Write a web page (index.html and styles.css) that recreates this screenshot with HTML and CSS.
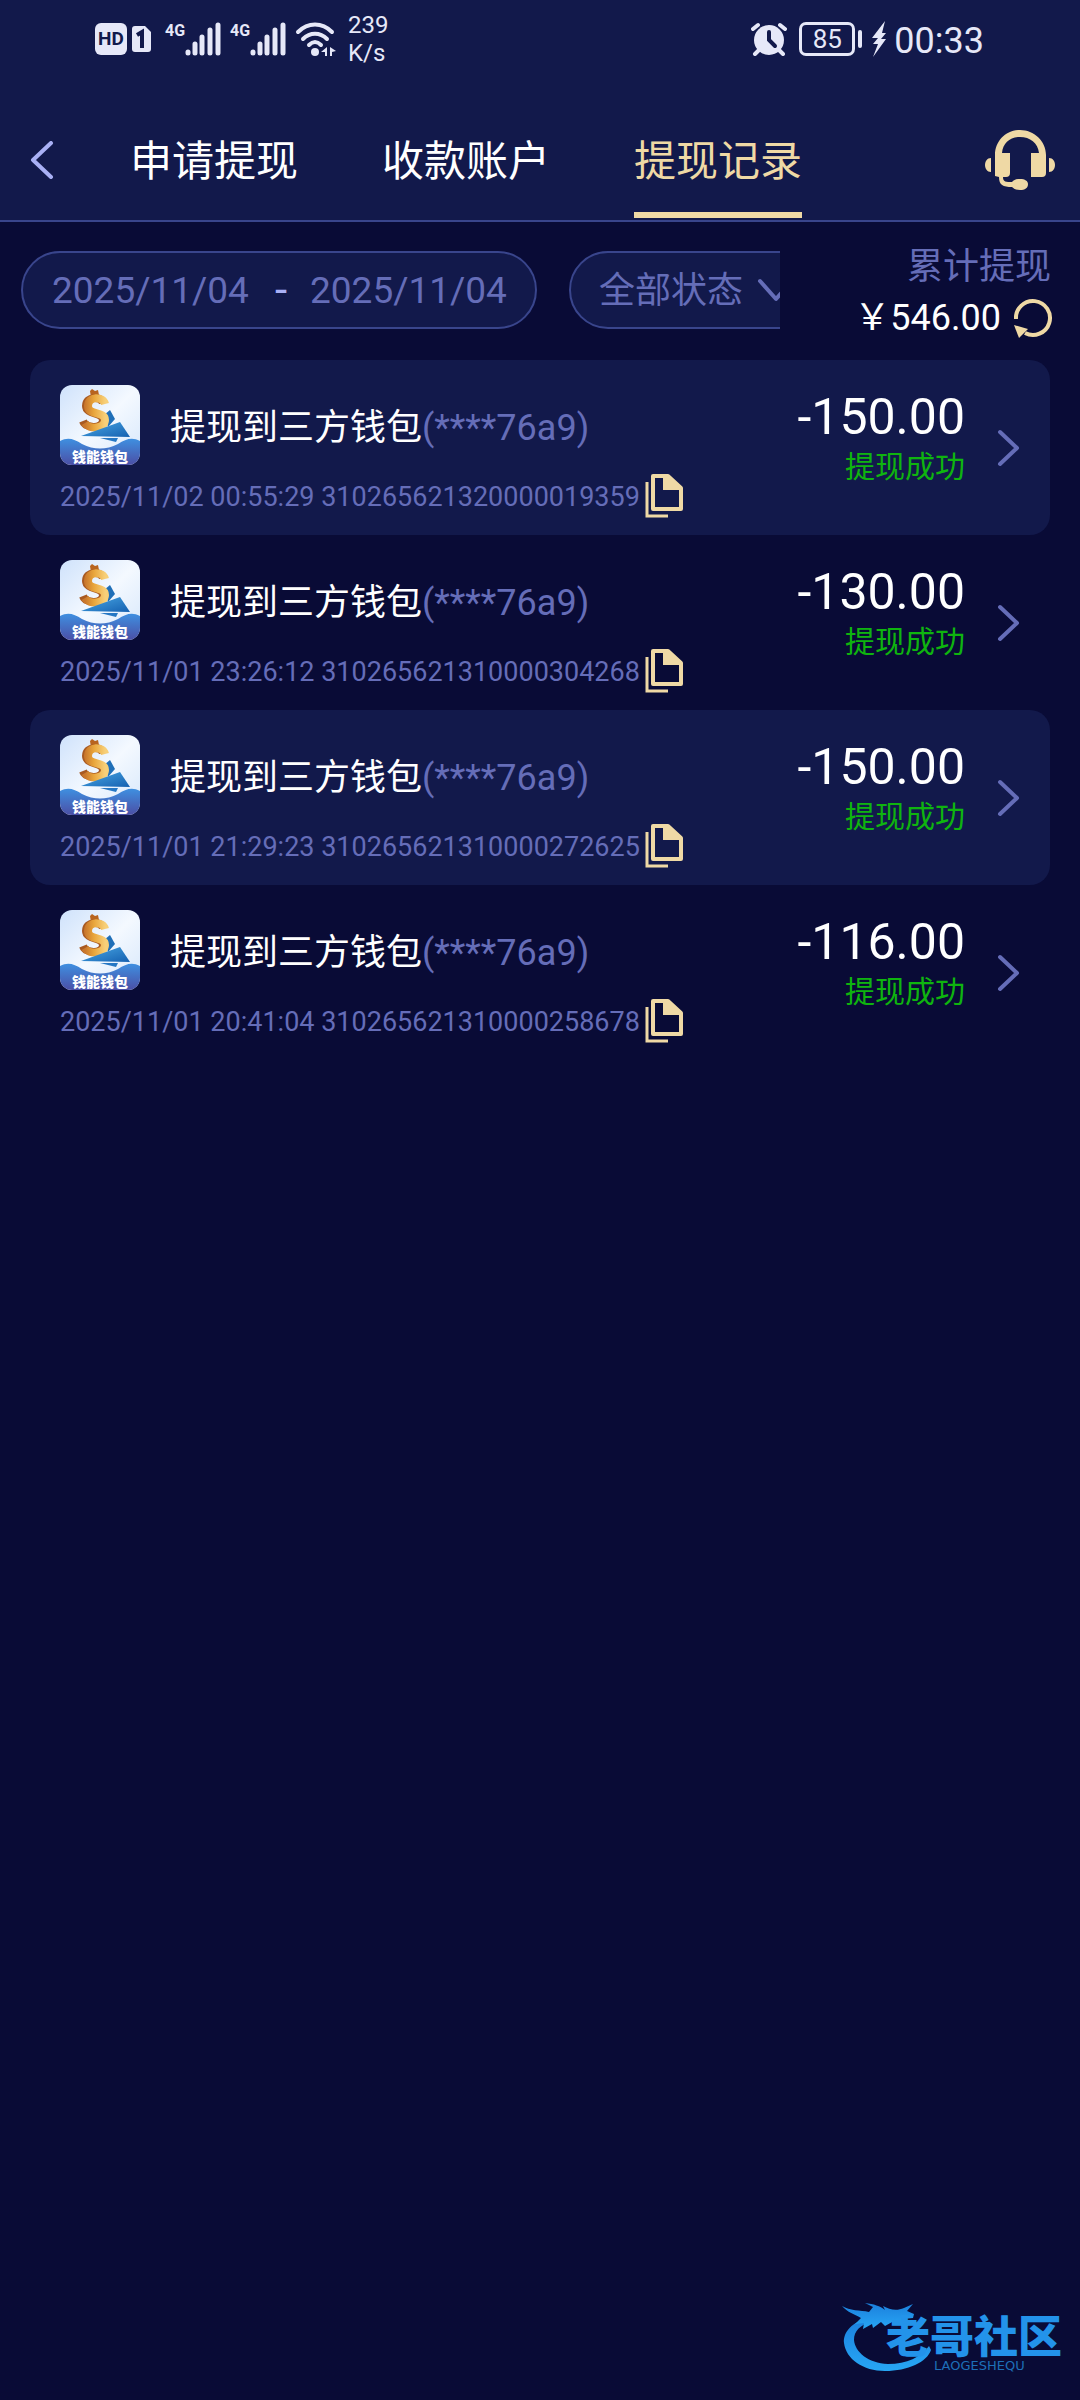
FILE: index.html
```html
<!DOCTYPE html>
<html lang="zh-CN">
<head>
<meta charset="utf-8">
<meta name="viewport" content="width=device-width, initial-scale=1">
<title>提现记录</title>
<link rel="stylesheet" href="styles.css">
</head>
<body>
<svg class="defs" aria-hidden="true">
  <defs>
    <linearGradient id="sky" x1="0" y1="0" x2="1" y2="1"><stop offset="0" stop-color="#cfe2fb"/><stop offset=".5" stop-color="#f4f9ff"/><stop offset="1" stop-color="#d5e6fb"/></linearGradient>
    <linearGradient id="sea" x1="0" y1="0" x2="0" y2="1"><stop offset="0" stop-color="#3f8fe0"/><stop offset="1" stop-color="#4b4fa6"/></linearGradient>
    <linearGradient id="coin" x1="0" y1="0" x2="1" y2="0"><stop offset="0" stop-color="#c9772b"/><stop offset=".45" stop-color="#e9a63c"/><stop offset="1" stop-color="#f7cf78"/></linearGradient>
    <linearGradient id="sail" x1="0" y1="0" x2="1" y2="1"><stop offset="0" stop-color="#4aa9e6"/><stop offset="1" stop-color="#1560b0"/></linearGradient>
    <linearGradient id="brand" x1="0" y1="0" x2="0" y2="1"><stop offset="0" stop-color="#1b7fdc"/><stop offset="1" stop-color="#27a7f5"/></linearGradient>
  </defs>
  <symbol id="wallet" viewBox="0 0 80 80">
    <rect width="80" height="80" fill="url(#sky)"/>
    <path d="M44 30l6-5 5 9-7 8z" fill="#1f6fb8"/>
    <path d="M30 6l2-2 3 2 3-1 1 5-8 3z" fill="#b8641f"/>
    <path d="M43 18c-2-7-17-7-17 3 0 9 17 6 17 14 0 9-17 9-20 1" fill="none" stroke="#a85a22" stroke-width="8"/>
    <path d="M45 19c-2-8-17-8-17 2s17 5 17 14c0 9-16 10-20 3" fill="none" stroke="url(#coin)" stroke-width="8"/>
    <path d="M21 51l39-14 10 15z" fill="url(#sail)"/>
    <path d="M40 53h18l-2 4z" fill="#2577c4"/>
    <path d="M0 56c8-4 14-2 22 3 12 6 24 6 36 0 8-5 14-7 22-3v24H0z" fill="url(#sea)"/>
  </symbol>
  <symbol id="copy" viewBox="0 0 38 44">
    <path d="M2 8v34h21" fill="none" stroke="currentColor" stroke-width="3"/>
    <path d="M8 2h15l13 12v21H8z" fill="none" stroke="currentColor" stroke-width="4" stroke-linejoin="round"/>
    <path d="M18 2h7l11 11v3H18z" fill="currentColor"/>
  </symbol>
  <symbol id="next" viewBox="0 0 24 38">
    <path d="M3 3l17 16L3 35" fill="none" stroke="currentColor" stroke-width="4" stroke-linecap="round" stroke-linejoin="round"/>
  </symbol>
  <symbol id="signal" viewBox="0 0 36 34">
    <path d="M3 30v1M10 22v9M17 15v16M25 8v23M33 3v28" fill="none" stroke="currentColor" stroke-width="5" stroke-linecap="round"/>
  </symbol>
</svg>

<header class="top">
  <div class="status-bar">
    <div class="status-left">
      <span class="hd">HD</span>
      <svg class="sim" viewBox="0 0 20 28"><path d="M3 1h10l6 6v17a3 3 0 0 1-3 3H3a3 3 0 0 1-3-3V4a3 3 0 0 1 3-3z" fill="currentColor"/><path d="M5 10l5-3v16" fill="none" stroke="#12194b" stroke-width="4"/></svg>
      <span class="cell"><span class="gen">4G</span><svg class="bars"><use href="#signal"/></svg></span>
      <span class="cell"><span class="gen">4G</span><svg class="bars"><use href="#signal"/></svg></span>
      <svg class="wifi" viewBox="0 0 42 36"><g fill="none" stroke="currentColor" stroke-width="4" stroke-linecap="round"><path d="M3 11c10-10 24-10 34 0"/><path d="M8 18c7-7 17-7 24 0"/><path d="M14 24c4-4 8-4 12 0"/></g><circle cx="20" cy="31" r="4" fill="currentColor"/><path d="M32 26v9h-2v-4h-4zM35 26l6 4-4 1v4h-2z" fill="currentColor"/></svg>
      <span class="speed">239<br>K/s</span>
    </div>
    <div class="status-right">
      <svg class="alarm" viewBox="0 0 36 34"><circle cx="18" cy="18" r="15" fill="currentColor"/><path d="M2 7l5-4M34 7l-5-4M8 28l-4 4M28 28l4 4" stroke="currentColor" stroke-width="4" stroke-linecap="round"/><path d="M18 10v8l6 6" fill="none" stroke="#12194b" stroke-width="4" stroke-linecap="round"/></svg>
      <span class="battery">85</span>
      <svg class="bolt" viewBox="0 0 16 38"><path d="M14 1L1 18h6l-5 6h5L2 37l13-18h-5l5-6h-4z" fill="currentColor"/></svg>
      <span class="clock">00:33</span>
    </div>
  </div>
  <nav class="nav">
    <button class="back" type="button" aria-label="返回"><svg viewBox="0 0 24 38"><path d="M21 2L3 19l18 17" fill="none" stroke="currentColor" stroke-width="4" stroke-linecap="round" stroke-linejoin="round"/></svg></button>
    <div class="tabs">
      <a class="tab" href="#apply">申请提现</a>
      <a class="tab" href="#accounts">收款账户</a>
      <a class="tab active" href="#records" aria-current="page">提现记录</a>
    </div>
    <button class="service" type="button" aria-label="客服"><svg viewBox="0 0 70 60"><path d="M10 46V25C10 11 21 0 35 0s26 11 26 25v18q0 4-4 4H46V23h8C53 13 45 7 35 7S18 13 17 23h8v20q0 4-4 4h-3c0 5 3 5 9 5 2-2 4-3 8-3 5 0 8 2 8 5 0 4-3 6-8 6-4 0-6-1-8-3-9 0-13-2-13-10z" fill="currentColor"/><path d="M6 28v14C-2 42-2 28 6 28zM64 28v14c8 0 8-14 0-14z" fill="currentColor"/></svg></button>
  </nav>
</header>

<main>
  <section class="filters">
    <div class="filter-scroll">
      <div class="pill dates">
        <input class="date" type="text" value="2025/11/04" aria-label="开始日期" readonly>
        <span class="dash">-</span>
        <input class="date" type="text" value="2025/11/04" aria-label="结束日期" readonly>
      </div>
      <div class="pill state">
        <select class="state-select" aria-label="状态"><option>全部状态</option></select>
        <svg class="down" viewBox="0 0 36 24"><path d="M3 3l16 18L35 3" fill="none" stroke="currentColor" stroke-width="4" stroke-linecap="round" stroke-linejoin="round"/></svg>
      </div>
    </div>
    <div class="total">
      <span class="total-label">累计提现</span>
      <div class="total-row">
        <span class="total-value">￥546.00</span>
        <button class="refresh" type="button" aria-label="刷新"><svg viewBox="0 0 40 40"><path d="M3 21A17 17 0 1 1 12 35" fill="none" stroke="currentColor" stroke-width="4"/><path d="M1 27l14 4-9 9z" fill="currentColor"/></svg></button>
      </div>
    </div>
  </section>

  <ul class="records">
    <li class="record">
      <div class="info">
        <div class="head"><span class="avatar"><svg><use href="#wallet"/></svg><span class="wallet-name">钱能钱包</span></span><span class="title">提现到三方钱包<span class="account">(****76a9)</span></span></div>
        <div class="meta"><span>2025/11/02 00:55:29 310265621320000019359</span><button class="copy" type="button" aria-label="复制"><svg><use href="#copy"/></svg></button></div>
      </div>
      <div class="money"><span class="amount">-150.00</span><span class="result">提现成功</span></div>
      <a class="next" href="#detail" aria-label="详情"><svg><use href="#next"/></svg></a>
    </li>
    <li class="record">
      <div class="info">
        <div class="head"><span class="avatar"><svg><use href="#wallet"/></svg><span class="wallet-name">钱能钱包</span></span><span class="title">提现到三方钱包<span class="account">(****76a9)</span></span></div>
        <div class="meta"><span>2025/11/01 23:26:12 310265621310000304268</span><button class="copy" type="button" aria-label="复制"><svg><use href="#copy"/></svg></button></div>
      </div>
      <div class="money"><span class="amount">-130.00</span><span class="result">提现成功</span></div>
      <a class="next" href="#detail" aria-label="详情"><svg><use href="#next"/></svg></a>
    </li>
    <li class="record">
      <div class="info">
        <div class="head"><span class="avatar"><svg><use href="#wallet"/></svg><span class="wallet-name">钱能钱包</span></span><span class="title">提现到三方钱包<span class="account">(****76a9)</span></span></div>
        <div class="meta"><span>2025/11/01 21:29:23 310265621310000272625</span><button class="copy" type="button" aria-label="复制"><svg><use href="#copy"/></svg></button></div>
      </div>
      <div class="money"><span class="amount">-150.00</span><span class="result">提现成功</span></div>
      <a class="next" href="#detail" aria-label="详情"><svg><use href="#next"/></svg></a>
    </li>
    <li class="record">
      <div class="info">
        <div class="head"><span class="avatar"><svg><use href="#wallet"/></svg><span class="wallet-name">钱能钱包</span></span><span class="title">提现到三方钱包<span class="account">(****76a9)</span></span></div>
        <div class="meta"><span>2025/11/01 20:41:04 310265621310000258678</span><button class="copy" type="button" aria-label="复制"><svg><use href="#copy"/></svg></button></div>
      </div>
      <div class="money"><span class="amount">-116.00</span><span class="result">提现成功</span></div>
      <a class="next" href="#detail" aria-label="详情"><svg><use href="#next"/></svg></a>
    </li>
  </ul>
</main>

<svg class="watermark" viewBox="0 0 222 74" role="img" aria-label="老哥社区">
  <path d="M28 15C10 20 1 30 2 41c2 16 19 28 41 28 23 0 42-9 46-21l-2-4C79 55 65 62 46 62 26 61 13 50 12 38c0-9 6-15 17-18z" fill="url(#brand)"/>
  <path d="M0 4c8 5 18 4 27 6l4-5-8-4c9 1 15 3 20 7l-2-4c7 4 14 5 21 2l9-4-6 7 7 3-1 4-10 1 9 2-5 4-13-4-9 5-4-4-8 6-1-4-9 5 1-6-9 1 6-6C12 12 5 10 0 4z" fill="url(#brand)"/>
  <text x="44" y="51" class="mark-name">老哥社区</text>
  <text x="92" y="68" class="mark-latin">LAOGESHEQU</text>
</svg>
</body>
</html>
```
FILE: styles.css
```css
:root {
  --page: #090b36;
  --panel: #12194b;
  --line: #39458c;
  --muted: #656db8;
  --gold: #efd9a5;
  --status: #e6e8f8;
}

* { box-sizing: border-box; }

body {
  position: relative;
  min-height: 100vh;
  margin: 0;
  background: var(--page);
  color: #fff;
  font-family: Roboto, "Noto Sans CJK SC", sans-serif;
  font-size: 36px;
}

button {
  display: block;
  padding: 0;
  border: 0;
  background: none;
  color: inherit;
}

svg { display: block; flex: none; }
.defs { position: absolute; width: 0; height: 0; }

.top {
  background: var(--panel);
  border-bottom: 2px solid var(--line);
}

/* Device status bar */
.status-bar {
  display: flex;
  justify-content: space-between;
  height: 100px;
  padding: 0 96px 22px 95px;
  color: var(--status);
}

.status-left, .status-right { display: flex; align-items: center; }

.hd {
  width: 32px;
  border-radius: 6px;
  background: var(--status);
  color: var(--panel);
  font: 700 19px/32px Roboto, sans-serif;
  text-align: center;
}

.sim { width: 20px; height: 28px; margin: 0 13px 0 5px; }
.cell { display: flex; width: 65px; height: 34px; }
.gen { width: 20px; font: 700 16px/18px Roboto, sans-serif; }
.bars { width: 36px; height: 34px; }
.wifi { width: 42px; height: 36px; }
.speed { margin-left: 11px; font: 24px/28px Roboto, sans-serif; }
.alarm { width: 36px; height: 34px; }

.battery {
  position: relative;
  width: 56px;
  margin: 0 16px 0 12px;
  border: 3px solid var(--status);
  border-radius: 7px;
  font: 26px/28px Roboto, sans-serif;
  text-align: center;
}

.battery::after {
  content: "";
  position: absolute;
  top: 5px;
  right: -10px;
  width: 4px;
  height: 18px;
  border-radius: 2px;
  background: var(--status);
}

.bolt { width: 16px; height: 38px; }
.clock { margin-left: 7px; padding-top: 4px; line-height: 40px; }

/* Page tabs */
.nav {
  display: flex;
  align-items: stretch;
  height: 120px;
  padding: 0 25px 0 30px;
}

.back { flex: none; width: 24px; color: #a9b0f5; }
.back svg { width: 24px; height: 38px; }

.tabs {
  display: flex;
  flex: 1;
  gap: 84px;
  margin-left: 76px;
}

.tab {
  padding-top: 30px;
  margin-bottom: 2px;
  border-bottom: 6px solid transparent;
  color: #fff;
  font-size: 42px;
  line-height: 64px;
  text-decoration: none;
}

.tab.active { border-color: var(--gold); color: var(--gold); }
.service { color: var(--gold); }
.service svg { width: 70px; height: 60px; }

/* Filters */
.filters { display: flex; padding: 20px 27px 16px 21px; }

.filter-scroll {
  display: flex;
  flex: 1;
  gap: 32px;
  min-width: 0;
  margin-top: 9px;
  overflow: hidden;
}

.pill {
  display: flex;
  flex: none;
  align-items: center;
  height: 78px;
  border: 2px solid var(--line);
  border-radius: 39px;
  background: var(--panel);
  color: var(--muted);
}

.dates { padding: 0 25px 0 29px; }

.date, .state-select {
  padding: 2px 0 0;
  border: 0;
  appearance: none;
  background: none;
  color: inherit;
  font: inherit;
  line-height: 52px;
}

.date { width: 200px; font-size: 37px; }
.dash { width: 58px; color: #a9b0f5; font-size: 44px; line-height: 52px; text-align: center; }
.state { padding: 0 28px; }
.state-select { width: 144px; }
.down { width: 36px; height: 24px; margin-left: 14px; }

.total {
  display: flex;
  flex: none;
  flex-direction: column;
  align-items: flex-end;
  width: 273px;
}

.total-label { padding-right: 2px; color: var(--muted); line-height: 50px; }
.total-row { display: flex; align-items: center; gap: 12px; line-height: 52px; }
.total-value { white-space: nowrap; }
.refresh { color: var(--gold); }
.refresh svg { width: 40px; height: 40px; }

/* Withdrawal records */
.records { margin: 0; padding: 0 30px; list-style: none; }

.record {
  display: flex;
  padding: 25px 29px 8px 30px;
  border-radius: 20px;
}

.record:nth-child(odd) { background: var(--panel); }
.info { flex: 1; min-width: 0; }
.head { display: flex; align-items: center; gap: 30px; }

.avatar {
  position: relative;
  flex: none;
  width: 80px;
  height: 80px;
  border-radius: 12px;
  overflow: hidden;
}

.avatar svg { width: 80px; height: 80px; }

.wallet-name {
  position: absolute;
  right: 0;
  bottom: 0;
  left: 0;
  font-size: 14px;
  font-weight: 900;
  line-height: 16px;
  text-align: center;
}

.title { padding-top: 5px; white-space: nowrap; line-height: 48px; }
.account { color: var(--muted); }

.meta {
  display: flex;
  align-items: center;
  gap: 5px;
  height: 62px;
  color: var(--muted);
  font-size: 27px;
  white-space: nowrap;
}

.meta span { padding-top: 2px; }
.copy { color: var(--gold); }
.copy svg { width: 38px; height: 44px; }
.money { display: flex; flex-direction: column; text-align: right; }
.amount { font-size: 50px; line-height: 64px; }
.result { color: #0fb40f; font-size: 30px; line-height: 36px; }
.next { align-self: center; margin: 0 0 16px 32px; color: var(--muted); }
.next svg { width: 24px; height: 38px; }

/* Community watermark over the page corner */
.watermark {
  position: absolute;
  right: 16px;
  bottom: 24px;
  width: 222px;
  height: 74px;
}

.mark-name { fill: #2393ea; font-size: 44px; font-weight: 900; }
.mark-latin { fill: #1d6fb8; font: 13px "DejaVu Sans", sans-serif; }
```
